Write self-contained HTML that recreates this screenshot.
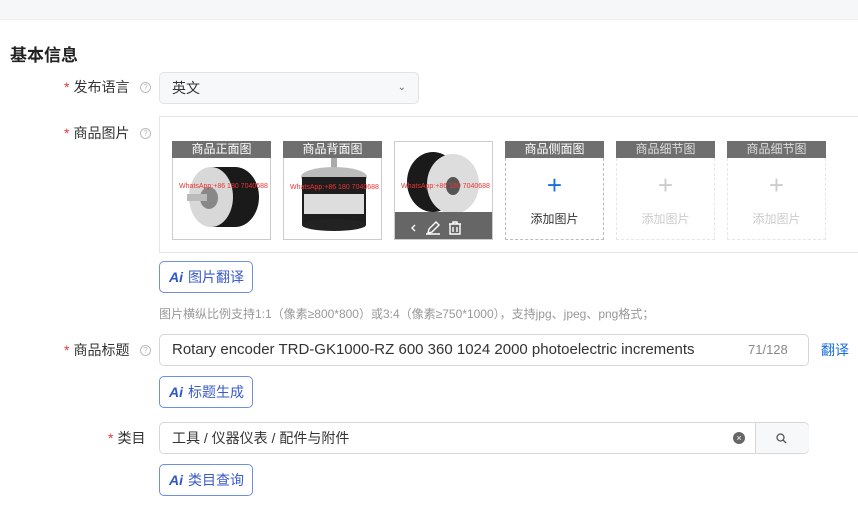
<!DOCTYPE html>
<html><head><meta charset="utf-8"><style>
*{margin:0;padding:0;box-sizing:border-box}
body{width:858px;height:507px;overflow:hidden;background:#fff;font-family:"Liberation Sans","Noto Sans CJK SC",sans-serif;color:#333;position:relative}
.a{position:absolute}
.lbl{position:absolute;font-size:14px;color:#333;text-align:right;white-space:nowrap}
.lbl b{color:#e4393c;font-weight:normal;margin-right:4px}
.q{position:absolute;width:11px;height:11px;border:1px solid #bbb;border-radius:50%;font-size:8px;color:#bbb;text-align:center;line-height:9px}
.inp{position:absolute;border:1px solid #d6d6d6;border-radius:5px;background:#fff;font-size:14px;color:#333;padding-left:12px}
.ai{position:absolute;left:159px;width:94px;height:32px;border:1px solid #6f8fe0;border-radius:5px;font-size:14px;color:#3a5bc9;line-height:30px;padding-left:9px;white-space:nowrap}
.ai i{font-style:italic;font-weight:bold;font-family:"Liberation Sans",sans-serif;color:#2f57c9;margin-right:5px}
.th{position:absolute;top:141px;width:99px;height:99px;border:1px solid #ccc;overflow:hidden;background:#fff}
.hd{position:absolute;top:141px;width:99px;height:17px;background:#6f6f6f;color:#fff;font-size:12px;text-align:center;line-height:17px}
.slot{position:absolute;top:158px;width:99px;height:82px;border:1px dashed #bbb;border-top:none;text-align:center;font-size:12px}
.slot .p{font-size:26px;line-height:26px;margin-top:14px;font-weight:300}
</style></head><body>
<div class="a" style="left:0;top:0;width:858px;height:20px;background:#f6f7f8;border-bottom:1px solid #eee"></div>
<div class="a" style="left:10px;top:41px;font-size:17px;font-weight:bold;color:#222">基本信息</div>

<div class="lbl" style="left:64px;top:77px"><b>*</b>发布语言</div><div class="q" style="left:140px;top:82px">?</div>
<div class="inp" style="left:159px;top:72px;width:260px;height:32px;line-height:30px;background:#f7f8fa;border-color:#e3e3e3">英文<span class="a" style="right:12px;top:0;color:#666;font-size:10px">&#8964;</span></div>

<div class="lbl" style="left:64px;top:123px"><b>*</b>商品图片</div><div class="q" style="left:140px;top:128px">?</div>
<div class="a" style="left:159px;top:116px;width:710px;height:137px;border:1px solid #e5e5e5"></div>

<svg width="0" height="0" style="position:absolute"><defs>
<g id="enc"><ellipse cx="62" cy="45" rx="24" ry="30" fill="#1a1a1a"/><rect x="38" y="15" width="24" height="60" fill="#1a1a1a"/><ellipse cx="38" cy="45" rx="22" ry="30" fill="#d8d8d8"/><ellipse cx="36" cy="46" rx="9" ry="11" fill="#888"/><rect x="14" y="42" width="20" height="7" fill="#bbb"/></g>
</defs></svg>
<div class="th" style="left:172px"><svg width="99" height="99" style="position:absolute;top:10px"><use href="#enc"/></svg><div class="a" style="top:41px;left:6px;color:#e33;font-size:7px;white-space:nowrap">WhatsApp:+86 180 7040688</div></div>
<div class="hd" style="left:172px">商品正面图</div>
<div class="th" style="left:283px"><svg width="99" height="99" style="position:absolute;top:0"><rect x="47" y="12" width="6" height="20" fill="#aaa"/><ellipse cx="50" cy="35" rx="33" ry="10" fill="#bbb"/><rect x="18" y="35" width="64" height="48" fill="#1e1e1e"/><rect x="20" y="52" width="60" height="20" fill="#ddd"/><ellipse cx="50" cy="83" rx="32" ry="6" fill="#222"/></svg><div class="a" style="top:42px;left:6px;color:#e33;font-size:7px;white-space:nowrap">WhatsApp:+86 180 7040688</div></div>
<div class="hd" style="left:283px">商品背面图</div>
<div class="th" style="left:394px"><svg width="99" height="99" style="position:absolute;top:0"><ellipse cx="38" cy="40" rx="26" ry="30" fill="#1a1a1a"/><ellipse cx="58" cy="42" rx="26" ry="30" fill="#ddd"/><ellipse cx="58" cy="44" rx="7" ry="9" fill="#555"/></svg><div class="a" style="top:41px;left:6px;color:#e33;font-size:7px;white-space:nowrap">WhatsApp:+86 180 7040688</div>
<div class="a" style="left:0;top:70px;width:99px;height:29px;background:#666"></div>
<svg class="a" style="left:14px;top:78px" width="60" height="16" viewBox="0 0 60 16" fill="none" stroke="#fff" stroke-width="1.4"><path d="M6 5 L3 8 L6 11"/><path d="M19 13 L20 9 L27 2 L30 5 L23 12 Z M17 14 H31"/><path d="M40 4 H52 M44 4 V2 H48 V4 M41 4 V14 H51 V4 M44 7 V12 M48 7 V12"/></svg></div>
<div class="hd" style="left:505px">商品侧面图</div>
<div class="slot" style="left:505px;color:#333"><div class="p" style="color:#1a6fe0;font-weight:normal">+</div><div style="margin-top:12px">添加图片</div></div>
<div class="hd" style="left:616px;color:#ddd">商品细节图</div>
<div class="slot" style="left:616px;color:#ccc;border-color:#e6e6e6"><div class="p">+</div><div style="margin-top:12px">添加图片</div></div>
<div class="hd" style="left:727px;color:#ddd">商品细节图</div>
<div class="slot" style="left:727px;color:#ccc;border-color:#e6e6e6"><div class="p">+</div><div style="margin-top:12px">添加图片</div></div>

<div class="ai" style="top:261px"><i>Ai</i>图片翻译</div>
<div class="a" style="left:159px;top:305px;font-size:12px;color:#999;white-space:nowrap">图片横纵比例支持1:1（像素≥800*800）或3:4（像素≥750*1000），支持jpg、jpeg、png格式；</div>

<div class="lbl" style="left:64px;top:340px"><b>*</b>商品标题</div><div class="q" style="left:140px;top:345px">?</div>
<div class="inp" style="left:159px;top:334px;width:650px;height:32px;line-height:30px;font-size:15px">Rotary encoder TRD-GK1000-RZ 600 360 1024 2000 photoelectric increments<span class="a" style="left:588px;top:0;color:#888;font-size:13px">71/128</span></div>
<div class="a" style="left:821px;top:340px;font-size:14px;color:#1a6fe0">翻译</div>
<div class="ai" style="top:376px"><i>Ai</i>标题生成</div>

<div class="lbl" style="left:108px;top:428px"><b>*</b>类目</div>
<div class="inp" style="left:159px;top:422px;width:650px;height:32px;line-height:30px">工具 / 仪器仪表 / 配件与附件
<span class="a" style="left:573px;top:9px;width:12px;height:12px;border-radius:50%;background:#666;color:#fff;font-size:9px;line-height:12px;text-align:center">×</span>
<span class="a" style="left:595px;top:0;width:54px;height:30px;border-left:1px solid #d6d6d6;background:#f7f8fa;border-radius:0 5px 5px 0"><svg style="position:absolute;left:20px;top:10px" width="11" height="11" viewBox="0 0 11 11" fill="none" stroke="#555" stroke-width="1.3"><circle cx="4.5" cy="4.5" r="3.5"/><path d="M7 7 L10 10"/></svg></span></div>
<div class="ai" style="top:464px"><i>Ai</i>类目查询</div>
</body></html>
